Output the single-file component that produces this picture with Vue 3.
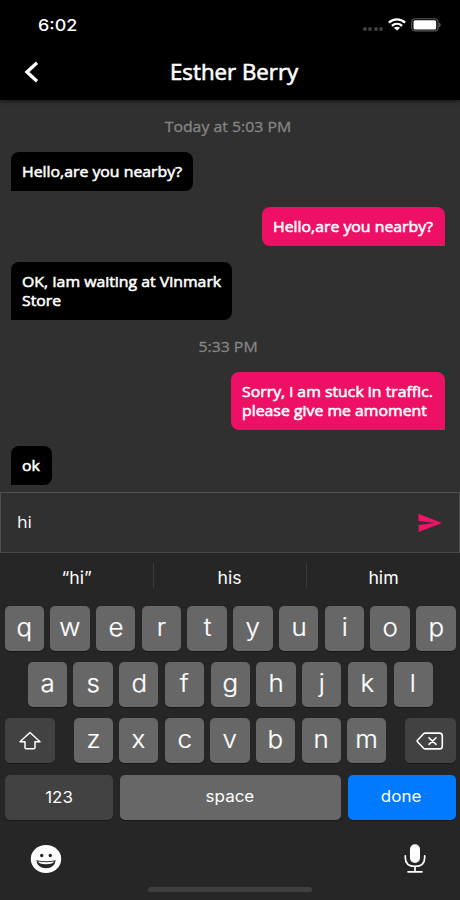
<script setup>
const feed = [
  { kind: 'time', text: 'Today at 5:03 PM', cls: 't1' },
  { kind: 'in', lines: ['Hello,are you nearby?'], cls: 'm1' },
  { kind: 'out', lines: ['Hello,are you nearby?'], cls: 'm2' },
  { kind: 'in', lines: ['OK, Iam waiting at Vinmark', 'Store'], cls: 'm3' },
  { kind: 'time', text: '5:33 PM', cls: 't2' },
  { kind: 'out', lines: ['Sorry, i am stuck in traffic.', 'please give me amoment'], cls: 'm4' },
  { kind: 'in', lines: ['ok'], cls: 'm5' },
]
const suggestions = ['“hi”', 'his', 'him']
const top = 'qwertyuiop'.split('')
const middle = 'asdfghjkl'.split('')
const bottom = 'zxcvbnm'.split('')
</script>

<template>
  <main class="phone">
    <header class="header">
      <div class="status">
        <span class="clock">6:02</span>
        <div class="indicators">
          <div class="dots"><i v-for="n in 4" :key="n"></i></div>
          <svg class="wifi" width="18" height="13" viewBox="0 0 18 13" fill="none" stroke="#fff" stroke-width="2.300">
            <path d="M.9 4.6C5.5.2 12.5.2 17.100 4.600M3.900 7.800C6.900 5.100 11.100 5.100 14.100 7.800" />
            <path d="M9 12.500L5.900 9.800C7.600 8.300 10.400 8.300 12.100 9.800Z" fill="#fff" stroke="none" />
          </svg>
          <svg class="battery" width="30" height="14" viewBox="0 0 30 14">
            <rect x=".7" y=".7" width="26.400" height="12.200" rx="3.500" fill="none" stroke="#5c5c5c" stroke-width="1.100" />
            <rect x="2.500" y="2.300" width="22.700" height="9.200" rx="1.500" fill="#fff" />
            <path d="M28.300 4.500C30 5.300 30 8.300 28.300 9.100Z" fill="#777" />
          </svg>
        </div>
      </div>
      <div class="bar">
        <svg class="back" width="16" height="22" viewBox="0 0 16 22" fill="none" stroke="#fff" stroke-width="3.400">
          <path d="M14 1.800L4 11L14 20.200" />
        </svg>
        <h1>Esther Berry</h1>
      </div>
    </header>

    <section class="feed">
      <template v-for="item in feed" :key="item.cls">
        <div v-if="item.kind === 'time'" class="time" :class="item.cls"><span>{{ item.text }}</span></div>
        <div v-else class="bubble" :class="[item.kind, item.cls]">
          <span v-for="line in item.lines" :key="line">{{ line }}</span>
        </div>
      </template>
    </section>

    <section class="composer">
      <span>hi</span>
      <svg width="24" height="20" viewBox="0 0 24 20"><path d="M.5.8L24 10L.5 19V12L17 10L.5 7.900Z" fill="#f01367" /></svg>
    </section>

    <section class="keyboard">
      <div class="suggestions">
        <div v-for="s in suggestions" :key="s"><span>{{ s }}</span></div>
      </div>
      <div class="keys">
        <div class="row">
          <div v-for="k in top" :key="k" class="key"><span>{{ k }}</span></div>
        </div>
        <div class="row inset">
          <div v-for="k in middle" :key="k" class="key"><span>{{ k }}</span></div>
        </div>
        <div class="row spread">
          <div class="key dark side">
            <svg width="24" height="20" viewBox="0 0 24 20" fill="none" stroke="#fff" stroke-width="1.500" stroke-linejoin="round">
              <path d="M12 1.500L22 10.700H17V16.500Q17 17.800 15.700 17.800H8.300Q7 17.800 7 16.500V10.700H2Z" />
            </svg>
          </div>
          <div class="letters">
            <div v-for="k in bottom" :key="k" class="key"><span>{{ k }}</span></div>
          </div>
          <div class="key dark side">
            <svg width="28" height="20" viewBox="0 0 28 20" fill="none" stroke="#fff" stroke-width="1.600" stroke-linejoin="round" stroke-linecap="round">
              <path d="M9.300 2.100H23.500Q26.300 2.100 26.300 4.800V15.200Q26.300 17.900 23.500 17.900H9.300Q8.300 17.900 7.600 17.200L1.500 10.700Q.9 10 1.500 9.300L7.600 2.800Q8.300 2.100 9.300 2.100Z" />
              <path d="M13 6.800L20 13.300M20 6.800L13 13.300" />
            </svg>
          </div>
        </div>
        <div class="row words">
          <div class="key dark numbers"><span>123</span></div>
          <div class="key space"><span>space</span></div>
          <div class="key done"><span>done</span></div>
        </div>
      </div>
      <div class="tools">
        <svg width="32" height="30" viewBox="0 0 32 30">
          <ellipse cx="16" cy="15" rx="15.200" ry="14" fill="#fff" />
          <circle cx="11.700" cy="11.500" r="1.700" fill="#262626" /><circle cx="20.300" cy="11.500" r="1.700" fill="#262626" />
          <path d="M6.300 16.300Q16 18 25.700 16.300Q24.600 24.200 16 24.200Q7.400 24.200 6.300 16.300Z" fill="#262626" />
          <path d="M8 17.600Q16 18.700 24 17.600Q23 20.200 16 20.200Q9 20.200 8 17.600Z" fill="#fff" />
        </svg>
        <svg width="22" height="30" viewBox="0 0 22 30" fill="none" stroke="#fff" stroke-width="1.700" stroke-linecap="round">
          <rect x="6" y=".2" width="10" height="18.800" rx="5" fill="#fff" stroke="none" />
          <path d="M1.300 11.800V13.500Q1.300 22.400 11 22.400Q20.700 22.400 20.700 13.500V11.800M11 22.400V27.500M4 27.800H18" />
        </svg>
      </div>
      <div class="home"></div>
    </section>
  </main>
</template>

<style>
body { margin: 0; background: #262626; }
</style>

<style scoped>
* { box-sizing: border-box; }
.phone { width: 460px; height: 900px; overflow: hidden; display: flex; flex-direction: column; background: #303030; color: #fff; font-family: "Open Sans", sans-serif; }
svg { display: block; flex: none; }
span, h1 { white-space: nowrap; }
.header { height: 100px; flex: none; background: #000; box-shadow: 0 1px 4px rgba(0, 0, 0, .65); }
.status { height: 50px; display: flex; justify-content: space-between; padding: 15px 19px 0 38px; }
.clock { font: 500 16px/20px Inter, sans-serif; transform: scaleX(1.12); transform-origin: left; }
.indicators { display: flex; }
.dots { display: flex; gap: 1.300px; padding: 12px 5px 0 0; }
.dots i { width: 4px; height: 4px; border-radius: 50%; background: #404040; }
.wifi { margin: 3px 5px 0 0; }
.battery { margin-top: 3px; }
.bar { height: 50px; display: flex; padding: 11px 0 0 23px; }
h1 { margin: -4px 0 0 131px; font-size: 21px; line-height: 30px; font-weight: 400; -webkit-text-stroke: .6px; transform: scaleX(1.06); transform-origin: left; }
.feed { height: 392px; flex: none; display: flex; flex-direction: column; padding: 16px 15px 0 11px; }
.time { align-self: center; height: 20px; color: #858585; font-size: 15px; line-height: 20px; -webkit-text-stroke: .3px; }
.time span { display: block; transform: scaleX(1.055); }
.t1 { margin-bottom: 16px; }
.t2 { margin: 16px 0; }
.bubble { padding: 10px 11px; border-radius: 8px; font-size: 15px; line-height: 19px; -webkit-text-stroke: .55px; flex: none; }
.bubble span { display: block; transform-origin: left; transform: scaleX(1.055); }
.in { align-self: flex-start; background: #000; border-bottom-left-radius: 0; }
.out { align-self: flex-end; background: #ee1065; border-bottom-right-radius: 0; }
.m1 { width: 182px; height: 39px; margin-bottom: 16px; }
.m2 { width: 183px; height: 39px; margin-bottom: 16px; }
.m3 { width: 221px; height: 58px; }
.m4 { width: 214px; height: 58px; margin-bottom: 16px; }
.m5 { width: 41px; height: 39px; }
.composer { height: 61px; flex: none; border: 1px solid #505050; border-bottom-color: #484848; display: flex; justify-content: space-between; align-items: center; padding: 0 17px 0 16px; }
.composer span { font-size: 16px; margin-top: -1px; transform: scaleX(1.08); transform-origin: left; }
.keyboard { flex: 1; background: #262626; font-family: Inter, sans-serif; }
.suggestions { height: 53px; display: flex; padding-top: 10px; }
.suggestions div { flex: 1; height: 25px; text-align: center; font-size: 17px; line-height: 31px; }
.suggestions div + div { border-left: 1px solid #3c3c3c; }
.suggestions span { display: inline-block; transform: scaleX(1.04); }
.keys { display: flex; flex-direction: column; gap: 11.200px; padding: 0 4.500px; }
.row, .letters { display: flex; gap: 6.300px; height: 45px; }
.inset { padding: 0 22.500px 0 23px; }
.spread { justify-content: space-between; gap: 0; }
.letters { width: 313px; }
.key { flex: 1; height: 45px; border-radius: 5px; background: #676767; box-shadow: 0 1px 0 #181818; display: flex; align-items: center; justify-content: center; font-size: 24px; font-weight: 300; -webkit-text-stroke: .2px; line-height: 41px; }
.key > span { transform: translateY(-1px) scaleX(1.08); }
.dark { background: #424242; }
.side { flex: none; width: 50.500px; }
.words { gap: 7px; }
.words .key { font-size: 16px; font-weight: 400; -webkit-text-stroke: 0; }
.words .key > span { transform: scaleX(1.06); }
.words .space > span, .words .done > span { transform: translateY(-1px) scaleX(1.06); }
.words .numbers { flex: none; width: 108.500px; }
.words .done { flex: none; width: 108px; background: #007bff; }
.tools { display: flex; justify-content: space-between; padding: 24px 34px 0 30px; height: 67px; }
.home { width: 164px; height: 5px; border-radius: 3px; background: #404040; margin-left: 148px; }
</style>
